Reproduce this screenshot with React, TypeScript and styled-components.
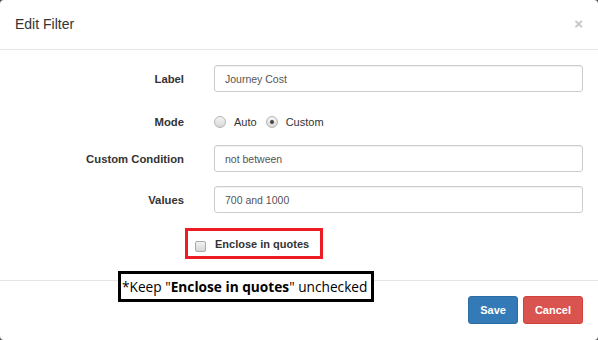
import styled, { createGlobalStyle } from "styled-components"

const GlobalStyle = createGlobalStyle`
	html, body {
		margin: 0;
		padding: 0;
		background: #4a4a4a;
	}
	body {
		font-family: "Liberation Sans", Arial, sans-serif;
		color: #333;
	}
`

const Modal = styled.div`
	position: relative;
	width: 598px;
	height: 340px;
	background: #fff;
	border-radius: 4px;
	overflow: hidden;
	box-sizing: border-box;
`

const Header = styled.div`
	height: 50px;
	box-sizing: border-box;
	border-bottom: 1px solid #e5e5e5;
	display: flex;
	align-items: center;
	justify-content: space-between;
	padding: 0 15px 2px 15px;
`

const Title = styled.h4`
	margin: 0;
	font-size: 14px;
	font-weight: normal;
	color: #333;
`

const Close = styled.span`
	font-size: 15px;
	font-weight: bold;
	color: #c4c4c4;
	line-height: 1;
`

const Body = styled.div`
	height: 230px;
	padding: 15px 15px 0 0;
	box-sizing: border-box;
`

const Row = styled.div<{ $mb: number }>`
	display: grid;
	grid-template-columns: 184px 1fr;
	column-gap: 30px;
	align-items: center;
	height: 27px;
	margin-bottom: ${(p) => p.$mb}px;
`

const Label = styled.label`
	text-align: right;
	font-size: 11.3px;
	font-weight: bold;
	color: #333;
`

const Input = styled.div`
	height: 27px;
	box-sizing: border-box;
	border: 1px solid #ccc;
	border-radius: 3px;
	padding: 0 10px;
	display: flex;
	align-items: center;
	font-size: 10.5px;
	color: #555;
	box-shadow: inset 0 1px 1px rgba(0, 0, 0, 0.06);
`

const Radios = styled.div`
	display: flex;
	align-items: center;
	font-size: 11px;
	color: #333;
`

const Radio = styled.span<{ $checked?: boolean }>`
	width: 10px;
	height: 10px;
	border-radius: 50%;
	border: 1px solid #b5b5b5;
	background: linear-gradient(#f4f4f4, #d8d8d8);
	display: inline-flex;
	align-items: center;
	justify-content: center;
	margin-right: 8px;
	&::after {
		content: "";
		width: 4px;
		height: 4px;
		border-radius: 50%;
		background: ${(p) => (p.$checked ? "#444" : "transparent")};
	}
`

const RadioText = styled.span`
	margin-right: 9px;
`

const CheckRow = styled.div`
	display: flex;
	padding-left: 185px;
`

const Highlight = styled.div`
	width: 138px;
	height: 31px;
	box-sizing: border-box;
	border: 3px solid #ed1c24;
	display: flex;
	align-items: center;
	padding-left: 7px;
	padding-top: 1px;
	font-size: 11px;
	font-weight: bold;
	color: #333;
`

const Checkbox = styled.span`
	width: 11px;
	height: 11px;
	box-sizing: border-box;
	border: 1px solid #aaa;
	border-radius: 2px;
	background: linear-gradient(#f2f2f2, #d6d6d6);
	margin: 5px 9px 0 0;
`

const Footer = styled.div`
	border-top: 1px solid #e5e5e5;
	display: flex;
	justify-content: flex-end;
	gap: 5px;
	padding: 15px 15px 0 0;
`

const Button = styled.button<{ $variant: "primary" | "danger" }>`
	height: 28px;
	padding: 0 11px;
	border-radius: 3px;
	font-family: "Liberation Sans", Arial, sans-serif;
	font-size: 11px;
	font-weight: bold;
	color: #fff;
	background: ${(p) => (p.$variant === "primary" ? "#337ab7" : "#d9534f")};
	border: 1px solid ${(p) => (p.$variant === "primary" ? "#2e6da4" : "#d43f3a")};
`

const Note = styled.div`
	position: absolute;
	left: 118px;
	top: 271px;
	width: 256px;
	height: 31px;
	box-sizing: border-box;
	border: 3px solid #000;
	background: #fff;
	display: flex;
	align-items: center;
	padding-left: 1px;
	font-family: "Open Sans", "Noto Sans", sans-serif;
	font-size: 13.7px;
	color: #000;
	white-space: nowrap;
`

export default function App() {
	return (
		<>
			<GlobalStyle />
			<Modal>
				<Header>
					<Title>Edit Filter</Title>
					<Close>×</Close>
				</Header>
				<Body>
					<Row $mb={16}>
						<Label>Label</Label>
						<Input>Journey Cost</Input>
					</Row>
					<Row $mb={10}>
						<Label>Mode</Label>
						<Radios>
							<Radio />
							<RadioText>Auto</RadioText>
							<Radio $checked />
							<RadioText>Custom</RadioText>
						</Radios>
					</Row>
					<Row $mb={14}>
						<Label>Custom Condition</Label>
						<Input>not between</Input>
					</Row>
					<Row $mb={15}>
						<Label>Values</Label>
						<Input>700 and 1000</Input>
					</Row>
					<CheckRow>
						<Highlight>
							<Checkbox />
							Enclose in quotes
						</Highlight>
					</CheckRow>
				</Body>
				<Footer>
					<Button $variant="primary">Save</Button>
					<Button $variant="danger">Cancel</Button>
				</Footer>
				<Note>
					*Keep "<b>Enclose in quotes</b>" unchecked
				</Note>
			</Modal>
		</>
	)
}
